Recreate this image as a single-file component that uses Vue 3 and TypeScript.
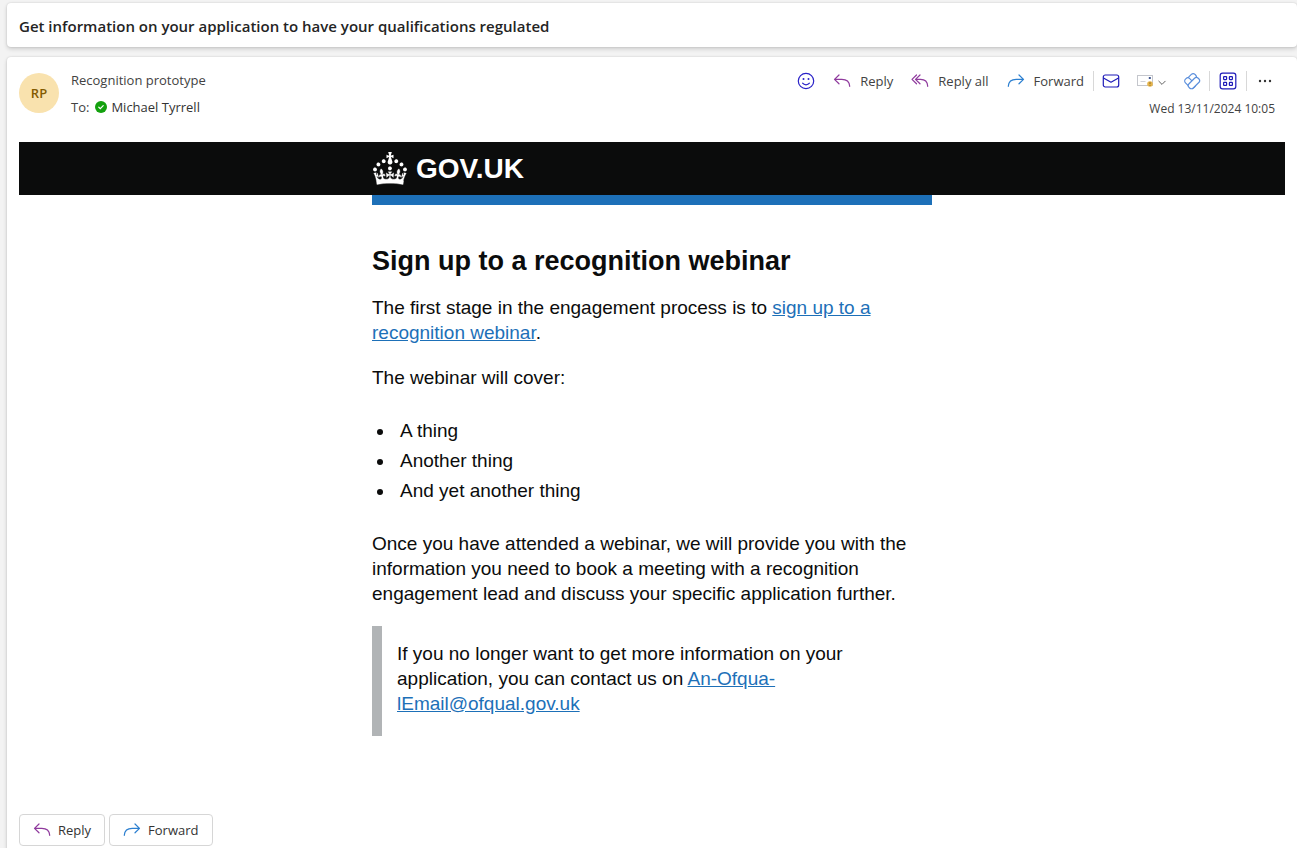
<script setup lang="ts">
const subject = 'Get information on your application to have your qualifications regulated'
const topics: string[] = ['A thing', 'Another thing', 'And yet another thing']
</script>

<template>
  <main class="pane">
    <header class="card subject">
      <h1>{{ subject }}</h1>
    </header>

    <article class="card message">
      <div class="meta">
        <div class="avatar">RP</div>
        <div class="people">
          <div class="line">Recognition prototype</div>
          <div class="line to">
            <span>To:</span>
            <svg class="presence" viewBox="0 0 12 12" aria-hidden="true">
              <circle cx="6" cy="6" r="6" fill="#13a10e" />
              <path d="M3.8 6.2l1.5 1.4 2.9-2.9" fill="none" stroke="#fff" stroke-width="1.2" stroke-linecap="round" />
            </svg>
            <span class="recipient">Michael Tyrrell</span>
          </div>
        </div>
        <div class="side">
          <div class="toolbar">
            <button type="button" class="tool" aria-label="React">
              <svg class="icon" viewBox="0 0 18 18" fill="none" stroke="#2a22c8" stroke-width="1.2" stroke-linecap="round">
                <circle cx="9" cy="9" r="7.7" />
                <path d="M5.6 11.2c1.6 2.1 5.2 2.1 6.8 0" />
                <circle cx="6.5" cy="7" r="1" fill="#2a22c8" stroke="none" />
                <circle cx="11.5" cy="7" r="1" fill="#2a22c8" stroke="none" />
              </svg>
            </button>
            <button type="button" class="tool">
              <svg class="icon" viewBox="0 0 18 18" fill="none" stroke="#8f3a9d" stroke-width="1.2" stroke-linecap="round" stroke-linejoin="round">
                <path d="M6 3L1.5 7.4 6 11.8M1.7 7.4h7.1c4.4 0 7.6 2.4 7.9 6.9" />
              </svg>
              <span>Reply</span>
            </button>
            <button type="button" class="tool">
              <svg class="icon" viewBox="0 0 18 18" fill="none" stroke="#8f3a9d" stroke-width="1.2" stroke-linecap="round" stroke-linejoin="round">
                <path d="M5.5 3L1 7.4l4.5 4.4M9 3L4.5 7.4 9 11.8M4.7 7.4h4.8c4.2 0 7 2.5 7.2 6.9" />
              </svg>
              <span>Reply all</span>
            </button>
            <button type="button" class="tool">
              <svg class="icon" viewBox="0 0 18 18" fill="none" stroke="#2b7fd0" stroke-width="1.2" stroke-linecap="round" stroke-linejoin="round">
                <path d="M12 3l4.5 4.4-4.5 4.4M16.3 7.4H9.2c-4.4 0-7.6 2.4-7.9 6.9" />
              </svg>
              <span>Forward</span>
            </button>
            <span class="rule"></span>
            <button type="button" class="tool tight" aria-label="Mark as unread">
              <svg class="icon" viewBox="0 0 18 18" fill="none" stroke="#1f1bb8" stroke-width="1.2" stroke-linejoin="round">
                <rect x="1.3" y="3" width="15.4" height="12" rx="2" />
                <path d="M1.5 6L9 10.2 16.5 6" />
              </svg>
            </button>
            <button type="button" class="tool tight" aria-label="Report message">
              <svg class="icon" viewBox="0 0 18 18" fill="none">
                <rect x="1.5" y="3.5" width="15" height="10" stroke="#c4c6cc" />
                <path d="M4.5 9.5h5" stroke="#d0d2d8" />
                <path d="M12.8 6h2" stroke="#3f5590" stroke-width="2" />
                <circle cx="14" cy="12" r="2.8" fill="#e5b44a" />
                <path d="M14 10.2v2M14 13v.8" stroke="#8a641c" />
              </svg>
              <svg class="chevron" viewBox="0 0 10 18" fill="none" stroke="#616161" stroke-linecap="round">
                <path d="M1.8 9.2L5 12.4l3.2-3.2" />
              </svg>
            </button>
            <button type="button" class="tool tight" aria-label="Viva Insights">
              <svg class="icon" viewBox="0 0 18 18" fill="#fff" stroke="#5b8fdc" stroke-width="1.2">
                <rect x="3.4" y="3.4" width="10.4" height="6" rx="2.6" transform="rotate(-45 8.6 6.4)" />
                <rect x="1" y="8.1" width="12" height="6" rx="2.6" transform="rotate(45 7 11.1)" />
                <rect x="4.4" y="8.1" width="13" height="6" rx="2.6" transform="rotate(-45 10.9 11.1)" />
              </svg>
            </button>
            <span class="rule"></span>
            <button type="button" class="tool" aria-label="Apps">
              <svg class="icon" viewBox="0 0 18 18" fill="none" stroke="#1f1bb8" stroke-width="1.2">
                <rect x="1.2" y="1.2" width="15.6" height="15.6" rx="2.4" />
                <rect x="4.6" y="4.6" width="3" height="3" rx=".5" />
                <rect x="10.4" y="4.6" width="3" height="3" rx=".5" />
                <rect x="4.6" y="10.4" width="3" height="3" rx=".5" />
                <rect x="10.4" y="10.4" width="3" height="3" rx=".5" />
              </svg>
            </button>
            <span class="rule"></span>
            <button type="button" class="tool" aria-label="More actions">
              <svg class="icon" viewBox="0 0 18 18" fill="#333">
                <circle cx="4" cy="9" r="1.2" />
                <circle cx="9" cy="9" r="1.2" />
                <circle cx="14" cy="9" r="1.2" />
              </svg>
            </button>
          </div>
          <time class="date" datetime="2024-11-13T10:05">Wed 13/11/2024 10:05</time>
        </div>
      </div>

      <div class="email">
        <div class="banner">
          <div class="column brand">
            <svg class="crown" viewBox="0 0 32 31" fill="#fff" stroke="#fff" stroke-width=".3" aria-hidden="true">
              <path d="M22.6 10.4c-1 .4-2-.1-2.4-1-.4-.9.1-2 1-2.4.9-.4 2 .1 2.4 1s-.1 2-1 2.4m-5.9 6.7c-.9.4-2-.1-2.4-1-.4-.9.1-2 1-2.4.9-.4 2 .1 2.4 1s-.1 2-1 2.4m10.8-3.7c-1 .4-2-.1-2.4-1-.4-.9.1-2 1-2.4.9-.4 2 .1 2.4 1s0 2-1 2.4m3.3 4.8c-1 .4-2-.1-2.4-1-.4-.9.1-2 1-2.4.9-.4 2 .1 2.4 1s-.1 2-1 2.4M17 4.7l2.3 1.2V2.5l-2.3.7-.2-.2.9-3h-3.4l.9 3-.2.2c-.1.1-2.3-.7-2.3-.7v3.4L15 4.7c.1.1.1.2.2.2l-1.3 4c-.1.2-.1.4-.1.6 0 1.1.8 2 1.9 2.2h.7c1-.2 1.9-1.1 1.9-2.1 0-.2 0-.4-.1-.6l-1.3-4c-.1-.2 0-.2.1-.3m-7.6 5.7c.9.4 2-.1 2.4-1 .4-.9-.1-2-1-2.4-.9-.4-2 .1-2.4 1s0 2 1 2.4m-5 3c.9.4 2-.1 2.4-1 .4-.9-.1-2-1-2.4-.9-.4-2 .1-2.4 1s.1 2 1 2.4m-3.2 4.8c.9.4 2-.1 2.4-1 .4-.9-.1-2-1-2.4-.9-.4-2 .1-2.4 1s0 2 1 2.4" stroke="none" />
              <path d="M16 27.2c4.4 0 8.6.4 12.3 1 .6-3.600 1.700-6.200 3-8.200l-2.300-.6c.2 1.300.3 1.900 0 2.700-.4-.4-.8-1.100-1.100-2.300l-1.200 4c.7-.5 1.300-.8 2-.9-1.100 2.500-2.600 3.100-3.500 3-1.100-.2-1.700-1.200-1.500-2.100.3-1.200 1.500-1.500 2.100-.1 1.100-2.300-.8-3-2-2.300 1.900-1.900 2.100-3.500.6-5.600-2.100 1.600-2.100 3.200-1.200 5.500-1.200-1.400-3.200-.6-2.500 1.600.9-1.400 2.100-.5 1.900.8-.2 1.100-1.700 2.100-3.500 1.900-2.700-.2-2.900-2.100-2.900-3.600.7-.1 1.900.5 2.900 1.900l.4-4.300c-1.100 1.100-2.100 1.400-3.200 1.400.4-1.200 1.500-2.400 1.500-2.400h-3.600s1.100 1.200 1.500 2.400c-1.100 0-2.100-.2-3.200-1.400l.4 4.300c1-1.400 2.200-2 2.900-1.900-.1 1.500-.2 3.400-2.900 3.600-1.900.2-3.400-.8-3.500-1.900-.2-1.300 1-2.200 1.900-.8.7-2.300-1.200-3-2.500-1.600.9-2.200.9-3.900-1.200-5.500-1.500 2-1.300 3.700.6 5.600-1.200-.7-3.100 0-2 2.300.6-1.400 1.800-1.100 2.100.1.2.9-.3 1.900-1.500 2.100-.9.2-2.400-.5-3.500-3 .6 0 1.200.3 2 .9l-1.200-4c-.3 1.100-.7 1.900-1.100 2.300-.3-.8-.2-1.400 0-2.700l-2.300.6c1.300 2 2.400 4.600 3 10.600 3.700-.8 7.900-1.200 12.300-1.200s8.600.4 12.300 1.200l.4-3-4.700-1.600z" />
            </svg>
            <span class="wordmark">GOV.UK</span>
          </div>
        </div>

        <div class="column copy">
          <h2>Sign up to a recognition webinar</h2>
          <p>
            The first stage in the engagement process is to
            <a href="#webinar">sign up to a recognition webinar</a>.
          </p>
          <p>The webinar will cover:</p>
          <ul>
            <li v-for="topic in topics" :key="topic">{{ topic }}</li>
          </ul>
          <p>
            Once you have attended a webinar, we will provide you with the information you need to
            book a meeting with a recognition engagement lead and discuss your specific application
            further.
          </p>
          <blockquote>
            If you no longer want to get more information on your application, you can contact us on
            <a href="mailto:An-Ofqua-lEmail@ofqual.gov.uk">An-Ofqua-lEmail@ofqual.gov.uk</a>
          </blockquote>
        </div>
      </div>

      <footer class="actions">
        <button type="button" class="action">
          <svg class="icon" viewBox="0 0 18 18" fill="none" stroke="#8f3a9d" stroke-width="1.2" stroke-linecap="round" stroke-linejoin="round">
            <path d="M6 3L1.5 7.4 6 11.8M1.7 7.4h7.1c4.4 0 7.6 2.4 7.9 6.9" />
          </svg>
          <span>Reply</span>
        </button>
        <button type="button" class="action">
          <svg class="icon" viewBox="0 0 18 18" fill="none" stroke="#2b7fd0" stroke-width="1.2" stroke-linecap="round" stroke-linejoin="round">
            <path d="M12 3l4.5 4.4-4.5 4.4M16.3 7.4H9.2c-4.4 0-7.6 2.4-7.9 6.9" />
          </svg>
          <span>Forward</span>
        </button>
      </footer>
    </article>
  </main>
</template>

<style>
body {
  margin: 0;
  background: #f3f3f3;
}
</style>

<style scoped>
.pane {
  box-sizing: border-box;
  height: 100vh;
  overflow: hidden;
  padding: 3px 0 0 7px;
  background: #f3f3f3;
  font-family: 'Segoe UI', 'Open Sans', sans-serif;
  font-size: 13px;
  line-height: 20px;
  color: #424242;
}
.card {
  background: #fff;
  border-radius: 4px;
  box-shadow: 0 0 2px rgba(0, 0, 0, 0.14), 0 2px 4px rgba(0, 0, 0, 0.16);
}
.subject {
  padding: 13px 12px 11px;
  margin-bottom: 10px;
}
.subject h1 {
  margin: 0;
  font-size: 15px;
  line-height: 20px;
  font-weight: 600;
  color: #242424;
}
.message {
  padding: 12px;
  min-height: 100vh;
}
.meta {
  display: flex;
  align-items: flex-start;
  margin-bottom: 18px;
}
.avatar {
  flex: none;
  width: 40px;
  height: 40px;
  margin: 4px 12px 0 0;
  border-radius: 50%;
  background: #f9e2ae;
  color: #835b00;
  font-weight: 600;
  line-height: 40px;
  text-align: center;
}
.people {
  flex: 1;
  padding-top: 1px;
}
.line {
  display: flex;
  align-items: center;
  height: 20px;
  margin-bottom: 7px;
}
.presence {
  width: 12px;
  height: 12px;
  margin: 0 4px 0 6px;
}
.recipient {
  color: #333;
}
.side {
  display: flex;
  flex-direction: column;
  align-items: flex-end;
}
.toolbar {
  display: flex;
  align-items: center;
  height: 24px;
  padding-right: 2px;
}
.tool,
.action {
  display: flex;
  align-items: center;
  border: 0;
  background: none;
  font: inherit;
  color: inherit;
  cursor: pointer;
}
.tool {
  gap: 9px;
  height: 24px;
  padding: 0 9px;
}
.tight {
  gap: 3px;
  padding: 0 8px;
}
.icon {
  flex: none;
  width: 18px;
  height: 18px;
}
.chevron {
  width: 10px;
  height: 18px;
}
.rule {
  width: 1px;
  height: 20px;
  background: #d8d8d8;
}
.date {
  padding: 6px 10px 0 0;
  font-size: 12px;
  line-height: 20px;
}
.email {
  font-family: Arial, 'Liberation Sans', sans-serif;
  font-size: 19px;
  line-height: 25px;
  color: #0b0c0c;
}
.banner {
  background: #0b0c0c;
}
.column {
  box-sizing: border-box;
  max-width: 560px;
  margin: 0 auto;
}
.brand {
  display: flex;
  align-items: center;
  gap: 9px;
  height: 53px;
  padding-left: 1px;
}
.crown {
  width: 34px;
  height: 33px;
}
.wordmark {
  font-size: 28px;
  line-height: 32px;
  font-weight: 700;
  color: #fff;
}
.copy {
  padding-top: 39px;
  border-top: 10px solid #1d70b8;
}
.copy h2 {
  margin: 0 0 16px;
  font-size: 27px;
  line-height: 35px;
  font-weight: 700;
}
.copy p {
  margin: 0 0 20px;
}
.copy a {
  color: #1d70b8;
}
.copy ul {
  margin: 26px 0 25px;
  padding-left: 23px;
}
.copy li {
  padding-left: 5px;
  line-height: 30px;
}
.copy blockquote {
  margin: 0;
  padding: 15px 15px 20px;
  border-left: 10px solid #b1b4b6;
}
.actions {
  display: flex;
  gap: 4px;
  margin-top: 78px;
}
.action {
  gap: 7px;
  height: 32px;
  padding: 0 13px;
  border: 1px solid #d6d6d6;
  border-radius: 4px;
  color: #333;
}
</style>
